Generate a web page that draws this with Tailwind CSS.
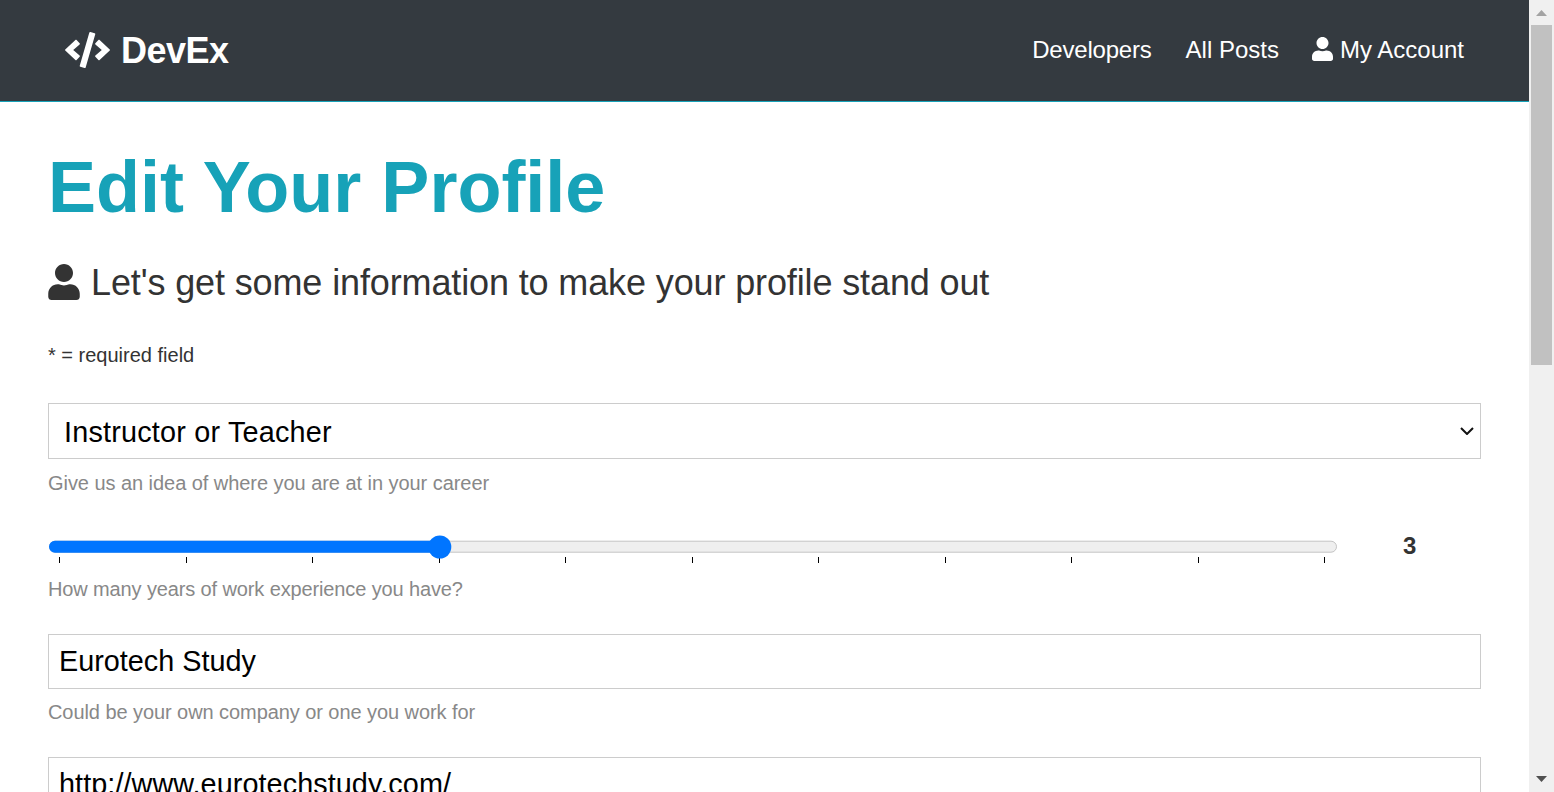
<!DOCTYPE html>
<html lang="en">
<head>
<meta charset="utf-8">
<title>DevEx</title>
<script src="https://cdn.jsdelivr.net/npm/@tailwindcss/browser@4"></script>
</head>
<body class="flex h-[792px] w-[1554px] overflow-hidden bg-white font-['Liberation_Sans',Arial,sans-serif] text-2xl text-[#333333]">
<div class="flex h-full w-[1529px] flex-col overflow-hidden">
  <nav class="flex h-[102px] shrink-0 items-start justify-between border-b border-[#17a2b8] bg-[#343a40] pl-[65px] pr-[65px] text-white">
    <h1 class="mt-[31px] flex h-[38px] items-center text-4xl font-bold leading-[38px]">
      <svg class="mr-[11px] h-9 w-[45px]" viewBox="0 0 640 512" fill="currentColor"><path d="M278.9 511.5l-61-17.7c-6.4-1.8-10-8.5-8.2-14.9L346.2 8.7c1.8-6.4 8.5-10 14.9-8.2l61 17.7c6.4 1.8 10 8.5 8.2 14.9L293.8 503.3c-1.9 6.4-8.5 10.1-14.9 8.2zm-114-112.2l43.5-46.4c4.6-4.9 4.3-12.7-.8-17.2L117 256l90.6-79.7c5.1-4.5 5.5-12.3.8-17.2l-43.5-46.4c-4.5-4.8-12.1-5.1-17-.5L3.8 247.2c-5.1 4.7-5.1 12.8 0 17.5l144.1 135.1c4.9 4.6 12.5 4.4 17-.5zm327.2.6l144.1-135.1c5.1-4.7 5.1-12.8 0-17.5L492.1 112.1c-4.8-4.5-12.4-4.3-17 .5L431.6 159c-4.6 4.9-4.3 12.7.8 17.2L523 256l-90.6 79.7c-5.1 4.5-5.5 12.3-.8 17.2l43.5 46.4c4.5 4.9 12.1 5.1 17 .6z"/></svg>
      <span class="pt-[2px] tracking-[-0.5px]">DevEx</span>
    </h1>
    <ul class="mt-[30px] flex h-[38px] items-center leading-[38px]">
      <li class="mr-[34px] pt-[2px] tracking-[-0.2px]">Developers</li>
      <li class="mr-[33px] pt-[2px]">All Posts</li>
      <li class="flex items-center">
        <svg class="mr-[7px] h-6 w-[21px]" viewBox="0 0 448 512" fill="currentColor"><path d="M224 256c70.7 0 128-57.3 128-128S294.7 0 224 0 96 57.3 96 128s57.3 128 128 128zm89.6 32h-16.7c-22.2 10.2-46.9 16-72.9 16s-50.6-5.8-72.9-16h-16.7C60.2 288 0 348.2 0 422.4V464c0 26.5 21.5 48 48 48h352c26.5 0 48-21.5 48-48v-41.6c0-74.2-60.2-134.4-134.4-134.4z"/></svg>
        <span class="pt-[2px]">My Account</span>
      </li>
    </ul>
  </nav>
  <main class="flex flex-col px-12 pt-[42px]">
    <h1 class="h-[86px] text-7xl font-bold leading-[86px] text-[#17a2b8]">Edit Your Profile</h1>
    <p class="mt-6 flex h-[58px] items-center text-4xl leading-[58px]">
      <svg class="mr-[11px] mb-[2px] h-9 w-8 shrink-0" viewBox="0 0 448 512" fill="currentColor"><path d="M224 256c70.7 0 128-57.3 128-128S294.7 0 224 0 96 57.3 96 128s57.3 128 128 128zm89.6 32h-16.7c-22.2 10.2-46.9 16-72.9 16s-50.6-5.8-72.9-16h-16.7C60.2 288 0 348.2 0 422.4V464c0 26.5 21.5 48 48 48h352c26.5 0 48-21.5 48-48v-41.6c0-74.2-60.2-134.4-134.4-134.4z"/></svg>
      <span class="whitespace-nowrap tracking-[-0.125px]">Let's get some information to make your profile stand out</span>
    </p>
    <p class="mt-6 h-[38px] text-xl leading-[38px]">* = required field</p>

    <div class="mt-[29px] flex h-14 items-center justify-between border border-[#cccccc] pl-[15px] pr-[6px] text-[28.8px] leading-[56px] text-black">
      <span class="pt-[2px] tracking-[0.2px]">Instructor or Teacher</span>
      <svg class="h-[8px] w-[14px]" viewBox="0 0 14 8" fill="none" stroke="#111" stroke-width="2"><path d="M1 1l6 6 6-6"/></svg>
    </div>
    <p class="mt-[8px] h-8 text-xl leading-8 tracking-[-0.05px] text-[#888888]">Give us an idea of where you are at in your career</p>

    <div class="mt-[33px] flex h-8 items-start">
      <svg class="h-8 w-[1290px]" viewBox="0 0 1290 32">
        <rect x="1.5" y="9.200" width="1287" height="11" rx="5.5" fill="#efefef" stroke="#c4c4c4"/>
        <path d="M391 8.700H7a6 6 0 0 0 0 12h384z" fill="#0075ff"/>
        <path d="M11.500 25v6M138.500 25v6M264.500 25v6M391.500 25v6M517.500 25v6M644.500 25v6M770.500 25v6M897.500 25v6M1023.500 25v6M1150.500 25v6M1276.500 25v6" stroke="#000"/>
        <circle cx="391.800" cy="15" r="11.500" fill="#0075ff"/>
      </svg>
      <span class="ml-[65px] font-bold leading-[27px]">3</span>
    </div>
    <p class="mt-[9px] h-8 text-xl leading-8 tracking-[-0.125px] text-[#888888]">How many years of work experience you have?</p>

    <div class="mt-[29px] h-[55px] border border-[#cccccc] px-[10px] text-[28.8px] leading-[53px] text-black">Eurotech Study</div>
    <p class="mt-[7px] h-8 text-xl leading-8 tracking-[-0.07px] text-[#888888]">Could be your own company or one you work for</p>
    <div class="mt-[29px] h-[55px] shrink-0 border border-[#cccccc] px-[10px] text-[28.8px] leading-[53px] tracking-[0.07px] text-black">http://www.eurotechstudy.com/</div>
  </main>
</div>
<aside class="flex h-full w-[25px] flex-col items-center bg-[#f0f0f0]">
  <svg class="h-[25px] w-[25px] shrink-0" viewBox="0 0 25 25"><path d="M7 16l5.500-6 5.500 6z" fill="#a3a3a3"/></svg>
  <div class="h-[340px] w-[21px] shrink-0 bg-[#c1c1c1]"></div>
  <svg class="mt-auto h-[25px] w-[25px] shrink-0" viewBox="0 0 25 25"><path d="M7 9l5.500 6 5.500-6z" fill="#505050"/></svg>
</aside>
</body>
</html>
